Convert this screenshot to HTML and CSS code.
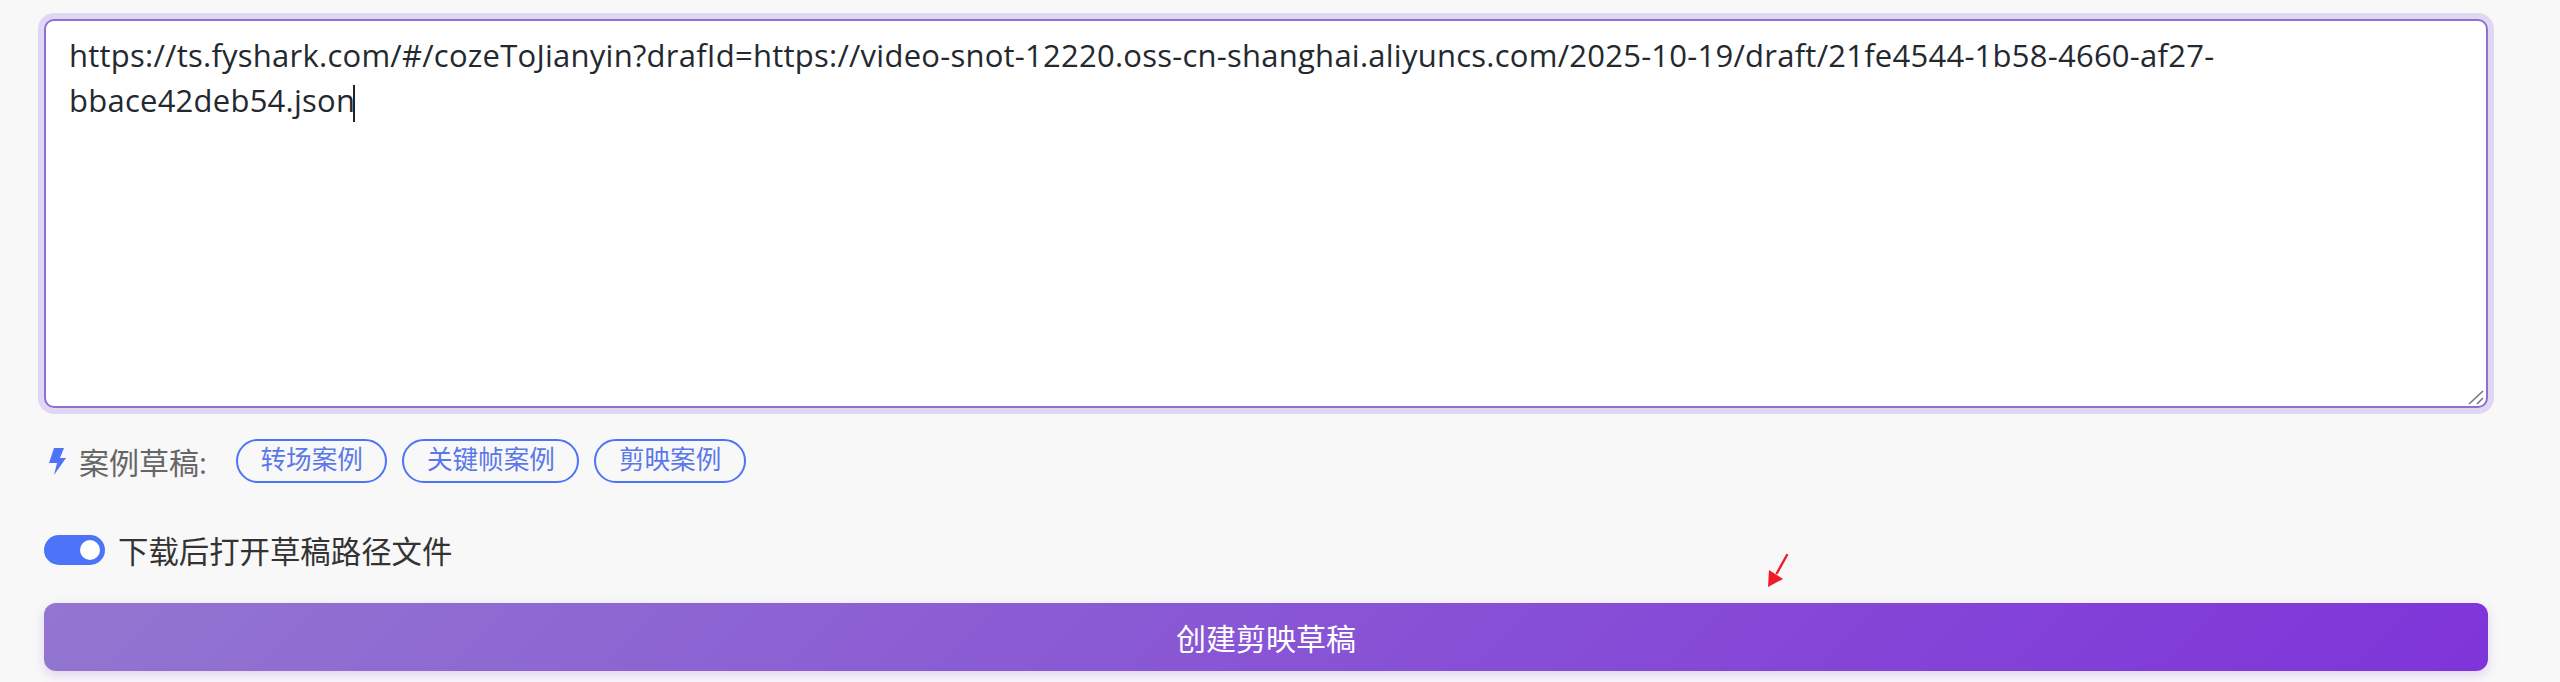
FILE: index.html
```html
<!DOCTYPE html>
<html lang="en">
<head>
    <meta charset="UTF-8">
    <meta name="viewport" content="width=device-width, initial-scale=1.0">
    <title>创建剪映草稿</title>
    <link rel="stylesheet" href="styles.css">
</head>
<body>
    <div class="container">
        <div class="textbox">
            https://ts.fyshark.com/#/cozeToJianyin?drafId=https://video-snot-12220.oss-cn-shanghai.aliyuncs.com/2025-10-19/draft/21fe4544-1b58-4660-af27-<br>bbace42deb54.json<span class="caret"></span>
            <svg class="resize-handle" width="16" height="15" viewBox="0 0 16 15">
                <path d="M1 14 L15 1 M9 14 L15 8" stroke="#777" stroke-width="1.6" fill="none"/>
            </svg>
        </div>

        <div class="examples">
            <svg class="bolt" width="17" height="27" viewBox="0 0 17 27">
                <path d="M5 0 L15 0 L11 10 L17 10 L5 27 L8 15 L0 15 Z" fill="#4d73f8"/>
            </svg>
            <span class="examples-label">案例草稿:</span>
            <div class="pills">
                <span class="pill">转场案例</span>
                <span class="pill">关键帧案例</span>
                <span class="pill">剪映案例</span>
            </div>
        </div>

        <div class="switch-row">
            <span class="switch"><span class="knob"></span></span>
            <span class="switch-label">下载后打开草稿路径文件</span>
        </div>

        <button class="create-btn">创建剪映草稿</button>
    </div>

    <!-- red annotation arrow drawn over the page -->
    <svg class="arrow" width="24" height="36" viewBox="0 0 24 36">
        <path d="M21 2 L11 20" stroke="#ee1c25" stroke-width="2.4" stroke-linecap="round" fill="none"/>
        <path d="M2 34 L3 17 L17 26 Z" fill="#ee1c25"/>
    </svg>
</body>
</html>
```

FILE: styles.css
```css
*{
    margin: 0;
    padding: 0;
    box-sizing: border-box;
}

body{
    background: #f8f8f8;
    font-family: "Open Sans", "Noto Sans CJK SC", sans-serif;
    position: relative;
    height: 682px;
    overflow: hidden;
}

.container{
    padding: 19px 72px 0 44px;
}

.textbox{
    position: relative;
    height: 389px;
    padding: 12px 23px;
    background: #fff;
    border: 2px solid #8e6fd6;
    border-radius: 10px;
    box-shadow: 0 0 0 6px #e0d8f2;
    font-size: 31px;
    letter-spacing: 0.245px;
    line-height: 45px;
    color: #24292f;
    white-space: nowrap;
}

.caret{
    display: inline-block;
    width: 2px;
    height: 37px;
    margin-left: -2px;
    vertical-align: middle;
    background: #222;
}

.resize-handle{
    position: absolute;
    right: 2px;
    bottom: 1px;
}

.examples{
    display: flex;
    align-items: center;
    height: 44px;
    margin-top: 31px;
    padding-left: 5px;
}

.bolt{
    margin-right: 13px;
}

.examples-label{
    width: 157px;
    font-size: 30px;
    color: #666;
}

.pills{
    display: flex;
    gap: 15px;
}

.pill{
    height: 44px;
    padding: 0 22.5px;
    border: 2px solid #4d73f8;
    border-radius: 22px;
    font-size: 25.6px;
    line-height: 38px;
    color: #5a78ea;
}

.switch-row{
    display: flex;
    align-items: center;
    gap: 13px;
    height: 30px;
    margin-top: 52px;
}

.switch{
    display: flex;
    align-items: center;
    justify-content: flex-end;
    width: 61px;
    height: 30px;
    padding-right: 5px;
    background: #4d73f8;
    border-radius: 15px;
}

.knob{
    width: 20px;
    height: 20px;
    background: #fff;
    border-radius: 50%;
}

.switch-label{
    font-size: 30.4px;
    color: #333;
}

.create-btn{
    display: block;
    width: 100%;
    height: 68px;
    margin-top: 38px;
    border: none;
    border-radius: 12px;
    background: linear-gradient(135deg, #9276d0, #7f34d9);
    box-shadow: 0 4px 12px rgba(126, 60, 216, 0.2);
    font-family: inherit;
    font-size: 30px;
    color: #fff;
}

.arrow{
    position: absolute;
    left: 1766px;
    top: 553px;
}
```
